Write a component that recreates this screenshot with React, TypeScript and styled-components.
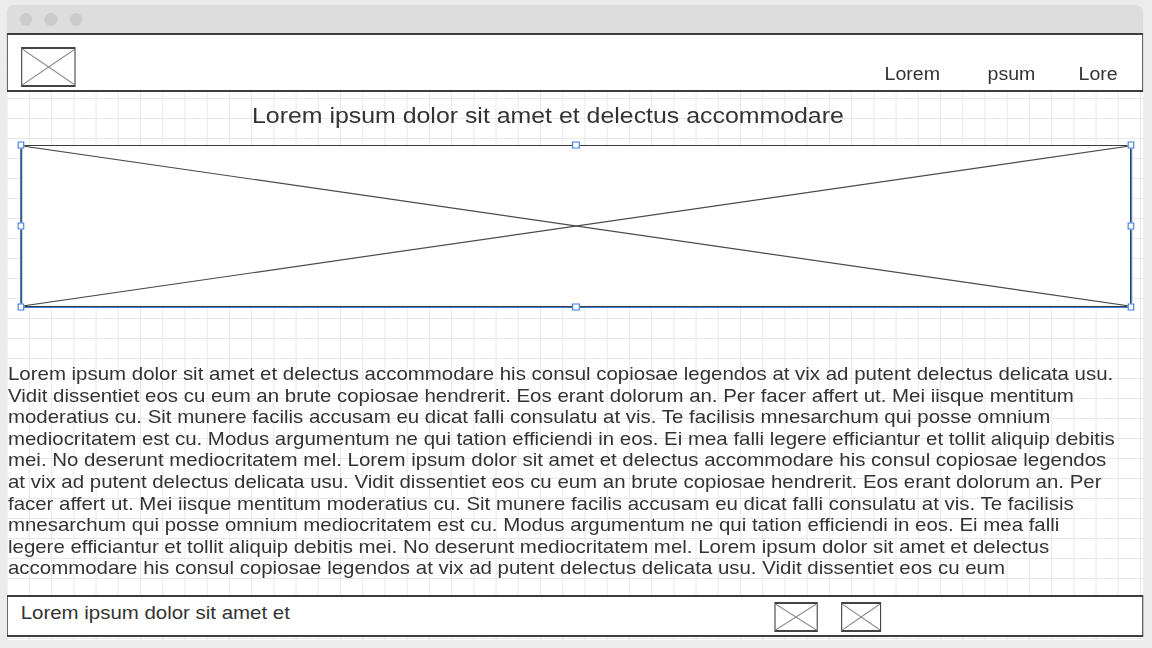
import React from "react";
import styled, { createGlobalStyle } from "styled-components";

const Global = createGlobalStyle`
  html, body {
    margin: 0;
    padding: 0;
    background: #ececec;
    overflow: hidden;
  }
  #root {
    width: 1152px;
    height: 648px;
  }
`;

/* The reference mock-up is drawn on a canvas stretched horizontally by 10/9.
   The stage is laid out in canvas units and stretched once, as a whole. */
const Stage = styled.div`
  width: 1036.8px;
  height: 648px;
  box-sizing: border-box;
  padding: 5px 0 0 6.3px;
  transform: scaleX(1.11111);
  transform-origin: 0 0;
  font-family: "Liberation Sans", Arial, Helvetica, sans-serif;
  color: #333;
`;

const Window = styled.div`
  width: 1022.4px;
  height: 635px;
  display: flex;
  flex-direction: column;
  border-radius: 7px 7px 0 0;
  overflow: hidden;
`;

const TitleBar = styled.div`
  flex: none;
  height: 28px;
  background: #dddddd;
  display: flex;
  align-items: center;
  gap: 10.8px;
  padding-left: 11.25px;
`;

const Dot = styled.span`
  width: 11.7px;
  height: 13px;
  border-radius: 50%;
  background: #cbcbcb;
`;

const Canvas = styled.div`
  flex: 1;
  display: flex;
  flex-direction: column;
  background-color: #ffffff;
  background-image: linear-gradient(to right, #e8e8e8 1px, transparent 1px),
    linear-gradient(to bottom, #e8e8e8 1px, transparent 1px);
  background-size: 20px 20px;
  background-position: 0 5px;
`;

const Header = styled.header`
  flex: none;
  height: 59px;
  box-sizing: border-box;
  border-style: solid;
  border-color: #3d3d3d;
  border-width: 2px 1.4px;
  background: #ffffff;
  display: flex;
  align-items: flex-start;
  padding-left: 11.25px;
`;

const Placeholder = styled.div<{ $w: number; $h: number; $mt?: number }>`
  flex: none;
  width: ${(p) => p.$w}px;
  height: ${(p) => p.$h}px;
  margin-top: ${(p) => p.$mt ?? 0}px;
  box-sizing: border-box;
  border-style: solid;
  border-color: #444;
  border-width: 2px 1.8px;
  background: #ffffff;
`;

const XSvg = styled.svg`
  display: block;
  width: 100%;
  height: 100%;
`;

const XLines = ({ color, weight = 1 }: { color: string; weight?: number }) => (
  <XSvg viewBox="0 0 100 100" preserveAspectRatio="none">
    <line x1="0" y1="0" x2="100" y2="100" stroke={color} strokeWidth={weight} vectorEffect="non-scaling-stroke" />
    <line x1="100" y1="0" x2="0" y2="100" stroke={color} strokeWidth={weight} vectorEffect="non-scaling-stroke" />
  </XSvg>
);

const Nav = styled.nav`
  align-self: flex-end;
  margin-left: 728.1px;
  padding-bottom: 6px;
  display: flex;
`;

const NavItem = styled.a<{ $w?: number }>`
  flex: none;
  width: ${(p) => (p.$w ? `${p.$w}px` : "auto")};
  font-size: 17.6px;
  line-height: 20px;
  color: #333;
  text-decoration: none;
`;

const PageTitle = styled.h1`
  flex: none;
  margin: 0;
  padding: 11px 0 16px 220.5px;
  font-size: 22.4px;
  line-height: 26px;
  font-weight: normal;
  color: #333;
`;

const ImageFrame = styled.div`
  flex: none;
  position: relative;
  margin-left: 12.6px;
  width: 999px;
  height: 162px;
  box-sizing: border-box;
  border: 1.8px solid #3d3d3d;
  background: #ffffff;
`;

const Selection = styled.div`
  position: absolute;
  inset: -1.8px;
  border: 1px solid #3c7be0;
  border-top-color: transparent;
  pointer-events: none;
`;

const Handle = styled.span<{ $x: number; $y: number }>`
  position: absolute;
  left: ${(p) => p.$x}%;
  top: ${(p) => p.$y}%;
  width: 6.3px;
  height: 7px;
  box-sizing: border-box;
  transform: translate(-50%, -50%);
  background: #ffffff;
  border: 1.2px solid #3c7be0;
`;

const Body = styled.p`
  flex: none;
  margin: 56px 0 0 0.9px;
  width: 999px;
  height: 216px;
  overflow: hidden;
  font-size: 18.4px;
  line-height: 21.6px;
  color: #333;
`;

const Footer = styled.footer`
  flex: none;
  margin-top: 16px;
  height: 42px;
  box-sizing: border-box;
  border-style: solid;
  border-color: #3d3d3d;
  border-width: 2px 1.4px;
  background: #ffffff;
  display: flex;
  align-items: flex-start;
`;

const FooterText = styled.div`
  flex: none;
  width: 689.9px;
  box-sizing: border-box;
  padding: 5px 0 0 11.3px;
  font-size: 18.4px;
  line-height: 21.6px;
  color: #333;
`;

const FooterIcons = styled.div`
  display: flex;
  gap: 20.7px;
`;

const handles: Array<[number, number]> = [
  [0, 0],
  [50, 0],
  [100, 0],
  [0, 50],
  [100, 50],
  [0, 100],
  [50, 100],
  [100, 100],
];

const text =
  "Lorem ipsum dolor sit amet et delectus accommodare his consul copiosae legendos at vix ad putent delectus delicata usu. Vidit dissentiet eos cu eum an brute copiosae hendrerit. Eos erant dolorum an. Per facer affert ut. Mei iisque mentitum moderatius cu. Sit munere facilis accusam eu dicat falli consulatu at vis. Te facilisis mnesarchum qui posse omnium mediocritatem est cu. Modus argumentum ne qui tation efficiendi in eos. Ei mea falli legere efficiantur et tollit aliquip debitis mei. No deserunt mediocritatem mel. Lorem ipsum dolor sit amet et delectus accommodare his consul copiosae legendos at vix ad putent delectus delicata usu. Vidit dissentiet eos cu eum an brute copiosae hendrerit. Eos erant dolorum an. Per facer affert ut. Mei iisque mentitum moderatius cu. Sit munere facilis accusam eu dicat falli consulatu at vis. Te facilisis mnesarchum qui posse omnium mediocritatem est cu. Modus argumentum ne qui tation efficiendi in eos. Ei mea falli legere efficiantur et tollit aliquip debitis mei. No deserunt mediocritatem mel. Lorem ipsum dolor sit amet et delectus accommodare his consul copiosae legendos at vix ad putent delectus delicata usu. Vidit dissentiet eos cu eum";

export default function App() {
  return (
    <>
      <Global />
      <Stage>
        <Window>
          <TitleBar>
            <Dot />
            <Dot />
            <Dot />
          </TitleBar>
          <Canvas>
            <Header>
              <Placeholder $w={49.5} $h={40} $mt={12}>
                <XLines color="#8a8a8a" />
              </Placeholder>
              <Nav>
                <NavItem $w={92.7}>Lorem</NavItem>
                <NavItem $w={81.9}>psum</NavItem>
                <NavItem>Lore</NavItem>
              </Nav>
            </Header>
            <PageTitle>Lorem ipsum dolor sit amet et delectus accommodare</PageTitle>
            <ImageFrame>
              <XLines color="#4a4a4a" weight={1.2} />
              <Selection>
                {handles.map(([x, y]) => (
                  <Handle key={`${x}-${y}`} $x={x} $y={y} />
                ))}
              </Selection>
            </ImageFrame>
            <Body>{text}</Body>
            <Footer>
              <FooterText>Lorem ipsum dolor sit amet et</FooterText>
              <FooterIcons>
                <Placeholder $w={38.7} $h={30} $mt={5}>
                  <XLines color="#8a8a8a" />
                </Placeholder>
                <Placeholder $w={36} $h={30} $mt={5}>
                  <XLines color="#8a8a8a" />
                </Placeholder>
              </FooterIcons>
            </Footer>
          </Canvas>
        </Window>
      </Stage>
    </>
  );
}
